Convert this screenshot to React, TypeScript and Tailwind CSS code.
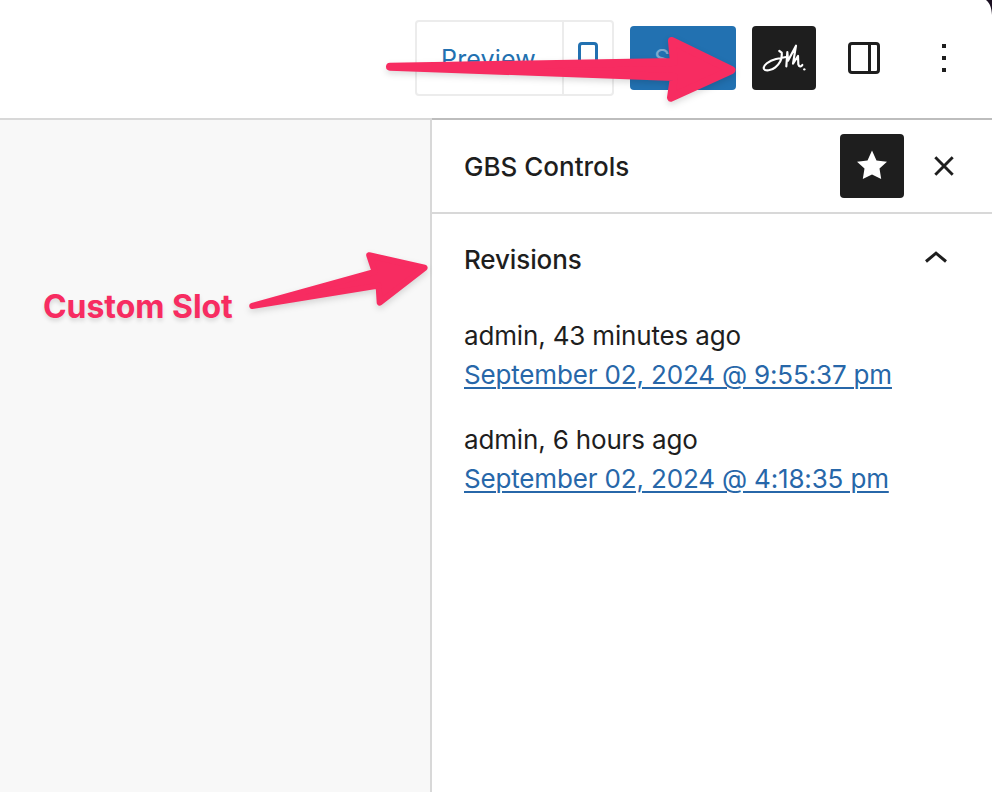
const revisions = [
  { meta: 'admin, 43 minutes ago', date: 'September 02, 2024 @ 9:55:37 pm' },
  { meta: 'admin, 6 hours ago', date: 'September 02, 2024 @ 4:18:35 pm' },
];

function Toolbar() {
  return (
    <header className="flex h-[118px] shrink-0 items-start justify-end bg-white pr-[46px]">
      <div className="mt-5 flex h-19 w-[199px] rounded-[4px] border-2 border-[#ececec] text-[#2271b1]">
        <button className="flex w-[145px] items-center justify-center pt-1 pr-0.5 text-[25px] tracking-[0.15px]">
          Preview
        </button>
        <button className="flex flex-1 justify-center border-l-2 border-[#ececec] pt-5">
          <svg width="20" height="32" viewBox="0 0 20 32" fill="none" stroke="currentColor" strokeWidth="3">
            <rect x="1.5" y="1.5" width="17" height="29" rx="2.5" />
          </svg>
        </button>
      </div>
      <button className="mt-[26px] ml-4 flex h-16 w-[106px] items-center justify-center rounded-[4px] bg-[#2271b1] pt-1 text-[25px] text-[#7eaad0]">
        Save
      </button>
      <button className="mt-[26px] ml-4 h-16 w-16 rounded-[4px] bg-[#1e1e1e]">
        <svg viewBox="0 0 192 192" className="size-16" fill="none" stroke="#fff" strokeWidth="6.5" strokeLinecap="round" strokeLinejoin="round">
          <path d="M82 75 L89 80 C91 97 84 113 70 124 C58 134 40 136 36 129 C31 118 52 104 72 99 C84 96 94 95 103 93" />
          <path d="M103 121 L106 78 L108 104 L132 59 L123 113 L138 90 L139 115 C141 122 147 124 151 117" />
          <circle cx="157" cy="130" r="3.5" fill="#fff" stroke="none" />
        </svg>
      </button>
      <button className="mt-[42px] ml-8 size-8">
        <svg width="32" height="32" viewBox="0 0 32 32" fill="none" stroke="#1e1e1e" strokeWidth="3">
          <rect x="1.5" y="1.5" width="29" height="29" rx="2.5" />
          <path d="M21.5 2V30" />
        </svg>
      </button>
      <button className="mt-11 ml-[62px] flex w-1 flex-col gap-2">
        <span className="size-1 bg-[#1e1e1e]" />
        <span className="size-1 bg-[#1e1e1e]" />
        <span className="size-1 bg-[#1e1e1e]" />
      </button>
    </header>
  );
}

function Sidebar() {
  return (
    <aside className="flex w-[562px] flex-col border-l-2 border-[#d8d8d8] bg-white">
      <div className="flex h-[94px] items-center border-b-2 border-[#d8d8d8] pl-8">
        <h2 className="flex-1 text-[26px] font-medium">GBS Controls</h2>
        <button className="flex size-16 items-center justify-center rounded-[4px] bg-[#1e1e1e]">
          <svg width="32" height="32" viewBox="0 0 32 32" fill="#fff">
            <path d="M16 0.5 L20.5 10.5 L31 11.7 L23.5 18.5 L25.2 29 L16 24.6 L6.8 29 L8.5 18.5 L1 11.7 L11.5 10.5 Z" />
          </svg>
        </button>
        <button className="mr-[38px] ml-[30px]">
          <svg width="20" height="20" viewBox="0 0 20 20" stroke="#1e1e1e" strokeWidth="2.9">
            <path d="M1.3 1.3 18.7 18.7M18.7 1.3 1.3 18.7" />
          </svg>
        </button>
      </div>
      <section className="px-8">
        <div className="flex h-[92px] items-center">
          <h3 className="flex-1 pb-0.5 text-[26px] font-medium tracking-[-0.12px]">Revisions</h3>
          <svg className="mr-3 mb-1.5" width="24" height="14" viewBox="0 0 24 14" fill="none" stroke="#1e1e1e" strokeWidth="3">
            <path d="M2 11.5 12 3.2 22 11.5" />
          </svg>
        </div>
        <ul className="mt-[10px] space-y-[26px] text-[26px] leading-[39px] tracking-[-0.16px]">
          {revisions.map((r) => (
            <li key={r.date} className="whitespace-nowrap">
              <div>{r.meta}</div>
              <a href="#" className="text-[#2767a9] underline decoration-2 underline-offset-[3px]">{r.date}</a>
            </li>
          ))}
        </ul>
      </section>
    </aside>
  );
}

export default function App() {
  return (
    <div className="relative flex h-[792px] w-[992px] flex-col overflow-hidden bg-white font-['Inter',sans-serif] text-[#1e1e1e]">
      <Toolbar />
      <div className="flex h-0.5 shrink-0">
        <div className="w-[432px] bg-[#d8d8d8]" />
        <div className="flex-1 bg-[#bdbdbd]" />
      </div>
      <main className="flex flex-1">
        <div className="flex-1 bg-[#f8f8f8] pt-[163px] pl-[43px]">
          <p className="text-[32px] leading-[48px] font-bold tracking-[-0.05px] whitespace-nowrap text-[#f72c61] [text-shadow:0_3px_4px_rgba(0,0,0,0.13)]">
            Custom Slot
          </p>
        </div>
        <Sidebar />
      </main>
      <svg className="pointer-events-none absolute inset-0 drop-shadow-[0_3px_3px_rgba(0,0,0,0.14)]" width="992" height="792" fill="#f72c61" stroke="#f72c61" strokeLinejoin="round">
        <path strokeWidth="8" d="M390 66.7 L674 62 L672 41 L731.5 70 L671 97.5 L674 77 Z" />
        <path strokeWidth="6" d="M252.2 306 L374.7 271.8 L369.2 255.2 L424.6 267.8 L379.7 302.7 L378.6 285.6 Z" />
      </svg>
      <svg className="absolute top-0 right-0" width="8" height="16" viewBox="0 0 8 16" fill="#1b1022">
        <path d="M2 0H8V15C7.6 8 6 3 2 0Z" />
      </svg>
    </div>
  );
}
